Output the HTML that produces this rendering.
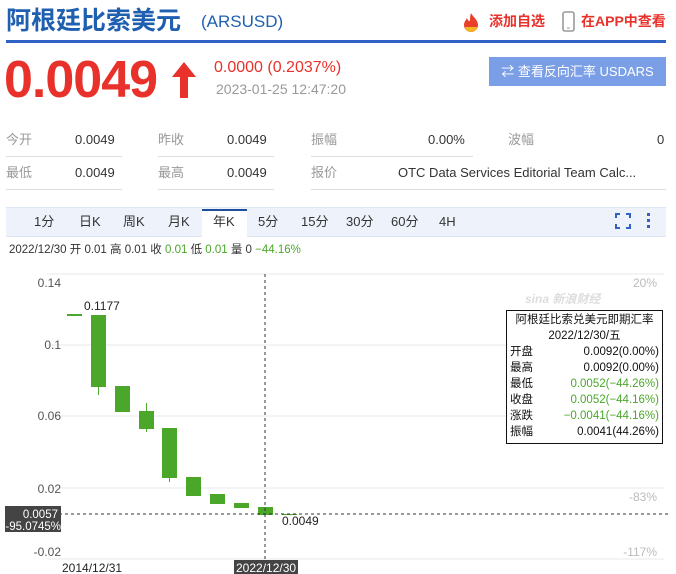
<!DOCTYPE html>
<html><head><meta charset="utf-8"><style>
*{margin:0;padding:0;box-sizing:border-box}
body{width:676px;height:574px;background:#fff;font-family:"Liberation Sans","Noto Sans CJK SC",sans-serif;position:relative;overflow:hidden;color:#333}
.a{position:absolute;white-space:nowrap}
.r{position:absolute;white-space:nowrap;font-size:13px;line-height:16px;height:16px}
.g{color:#999}
.grn{color:#4aa72a}
.t{position:absolute;top:214px;font-size:13px;line-height:16px;color:#333;white-space:nowrap}
</style></head><body>
<div class="a" style="left:6px;top:5px;font-size:25px;line-height:32px;font-weight:bold;color:#1f5fb0">阿根廷比索美元</div>
<div class="a" style="left:201px;top:12px;font-size:17px;color:#1f5fb0">(ARSUSD)</div>
<svg class="a" style="left:462px;top:12px" width="18" height="20" viewBox="0 0 18 20"><path d="M9 1C11 5 16 8 16 13A7 7 0 0 1 2 13C2 10 4 8 5 6C6 9 7 9 8 9C8 6 8 4 9 1Z" fill="#e8402a"/><path d="M3 15H15A6 5 0 0 1 3 15Z" fill="#f5b623"/></svg>
<div class="a" style="left:489px;top:12px;font-size:14px;line-height:18px;font-weight:bold;color:#e8312a">添加自选</div>
<svg class="a" style="left:562px;top:11px" width="13" height="21"><rect x="1" y="1" width="11" height="19" rx="2" fill="none" stroke="#999" stroke-width="1.6"/><line x1="5" y1="17" x2="8" y2="17" stroke="#999"/></svg>
<div class="a" style="left:581px;top:12px;font-size:14px;line-height:18px;font-weight:bold;color:#e8312a">在APP中查看</div>
<div class="a" style="left:6px;top:40px;width:660px;height:3px;background:#2f62c4"></div>
<div class="a" style="left:4px;top:50px;font-size:52px;line-height:60px;font-weight:bold;color:#e8312a;letter-spacing:-1px">0.0049</div>
<svg class="a" style="left:171px;top:61px" width="26" height="38"><path d="M13 1L25 16H17V37H9V16H1Z" fill="#e8312a"/></svg>
<div class="a" style="left:214px;top:59px;font-size:16px;color:#e8312a">0.0000 (0.2037%)</div>
<div class="a" style="left:216px;top:81px;font-size:14px;color:#999">2023-01-25 12:47:20</div>
<div class="a" style="left:489px;top:57px;width:177px;height:29px;background:#7b9fe6;color:#fff;font-size:13px;line-height:29px;text-align:center">⇄ 查看反向汇率 USDARS</div>
<div class="r g" style="left:6px;top:132px">今开</div>
<div class="r" style="left:75px;top:132px">0.0049</div>
<div class="r g" style="left:158px;top:132px">昨收</div>
<div class="r" style="left:227px;top:132px">0.0049</div>
<div class="r g" style="left:311px;top:132px">振幅</div>
<div class="r" style="left:428px;top:132px">0.00%</div>
<div class="r g" style="left:508px;top:132px">波幅</div>
<div class="r" style="left:657px;top:132px">0</div>
<div class="r g" style="left:6px;top:165px">最低</div>
<div class="r" style="left:75px;top:165px">0.0049</div>
<div class="r g" style="left:158px;top:165px">最高</div>
<div class="r" style="left:227px;top:165px">0.0049</div>
<div class="r g" style="left:311px;top:165px">报价</div>
<div class="r" style="left:398px;top:165px">OTC Data Services Editorial Team Calc...</div>
<div class="a" style="left:6px;top:156px;width:116px;height:1px;background:#ddd"></div>
<div class="a" style="left:158px;top:156px;width:116px;height:1px;background:#ddd"></div>
<div class="a" style="left:311px;top:156px;width:162px;height:1px;background:#ddd"></div>
<div class="a" style="left:6px;top:189px;width:116px;height:1px;background:#ddd"></div>
<div class="a" style="left:158px;top:189px;width:116px;height:1px;background:#ddd"></div>
<div class="a" style="left:311px;top:189px;width:355px;height:1px;background:#ddd"></div>
<div class="a" style="left:6px;top:207px;width:660px;height:30px;background:#edf2fb;border-top:1px solid #dde6f5;border-bottom:1px solid #dde6f5"></div>
<div class="a" style="left:202px;top:209px;width:45px;height:28px;background:#fff;border-top:2px solid #1f4f9c"></div>
<span class="t" style="left:34px">1分</span><span class="t" style="left:79px">日K</span><span class="t" style="left:123px">周K</span><span class="t" style="left:168px">月K</span><span class="t" style="left:213px">年K</span><span class="t" style="left:258px">5分</span><span class="t" style="left:301px">15分</span><span class="t" style="left:346px">30分</span><span class="t" style="left:391px">60分</span><span class="t" style="left:439px">4H</span>
<svg class="a" style="left:615px;top:213px" width="16" height="16" fill="none" stroke="#2f62c4" stroke-width="2"><path d="M1 5V1H5M11 1H15V5M15 11V15H11M5 15H1V11"/></svg>
<svg class="a" style="left:646px;top:212px" width="6" height="18" fill="#2f62c4"><rect x="1" y="1" width="3" height="3"/><rect x="1" y="7" width="3" height="3"/><rect x="1" y="13" width="3" height="3"/></svg>
<div class="a" style="left:9px;top:243px;font-size:11.5px;line-height:15px">2022/12/30 开 0.01 高 0.01 收 <span class="grn">0.01</span> 低 <span class="grn">0.01</span> 量 0 <span class="grn">−44.16%</span></div>
<svg class="a" style="left:0;top:260px" width="676" height="314" font-family="Liberation Sans" font-size="12">
<g stroke="#e8e8e8"><line x1="47" y1="14" x2="664" y2="14"/><line x1="47" y1="85" x2="664" y2="85"/><line x1="47" y1="156" x2="664" y2="156"/><line x1="47" y1="228" x2="664" y2="228"/><line x1="47" y1="299" x2="664" y2="299"/></g>
<g fill="#555" text-anchor="end"><text x="61" y="27">0.14</text><text x="61" y="89">0.1</text><text x="61" y="160">0.06</text><text x="61" y="233">0.02</text><text x="61" y="296">-0.02</text></g>
<g fill="#bbb" text-anchor="end"><text x="657" y="27">20%</text><text x="657" y="241">-83%</text><text x="657" y="296">-117%</text></g>
<text x="525" y="43" fill="#ddd" font-size="12" font-style="italic" font-weight="bold" font-family="Liberation Sans, Noto Sans CJK SC">sina 新浪财经</text>
<g fill="#4aa72a">
<rect x="67" y="54" width="15" height="2"/>
<rect x="91" y="55" width="15" height="72"/><rect x="98" y="127" width="1" height="8"/>
<rect x="115" y="126" width="15" height="26"/>
<rect x="139" y="151" width="15" height="18"/><rect x="146" y="143" width="1" height="29"/>
<rect x="162" y="168" width="15" height="50"/><rect x="169" y="218" width="1" height="4"/>
<rect x="186" y="217" width="15" height="19"/>
<rect x="210" y="234" width="15" height="10"/>
<rect x="234" y="243" width="15" height="5"/>
<rect x="258" y="247" width="15" height="8"/>
<rect x="282" y="254" width="15" height="1"/>
</g>
<text x="84" y="50" fill="#222">0.1177</text>
<text x="282" y="265" fill="#222">0.0049</text>
<g stroke="#333" stroke-dasharray="3,3"><line x1="265" y1="14" x2="265" y2="314"/><line x1="47" y1="254" x2="668" y2="254"/></g>
<rect x="5" y="246" width="56" height="26" fill="#444"/>
<text x="58" y="258" fill="#fff" text-anchor="end" font-size="11.5">0.0057</text>
<text x="61" y="270" fill="#fff" text-anchor="end" font-size="11.5">-95.0745%</text>
<text x="62" y="312" fill="#222">2014/12/31</text>
<rect x="234" y="300" width="64" height="14" fill="#444"/>
<text x="236" y="312" fill="#fff">2022/12/30</text>
</svg>
<div class="a" style="left:506px;top:310px;width:157px;height:134px;border:1px solid #111;background:#fff;font-size:11.5px;line-height:16px;padding:1px 3px;color:#111">
<div style="text-align:center">阿根廷比索兑美元即期汇率</div>
<div style="text-align:center">2022/12/30/五</div>
<div>开盘<span style="float:right">0.0092(0.00%)</span></div>
<div>最高<span style="float:right">0.0092(0.00%)</span></div>
<div>最低<span style="float:right" class="grn">0.0052(−44.26%)</span></div>
<div>收盘<span style="float:right" class="grn">0.0052(−44.16%)</span></div>
<div>涨跌<span style="float:right" class="grn">−0.0041(−44.16%)</span></div>
<div>振幅<span style="float:right">0.0041(44.26%)</span></div>
</div>
</body></html>
